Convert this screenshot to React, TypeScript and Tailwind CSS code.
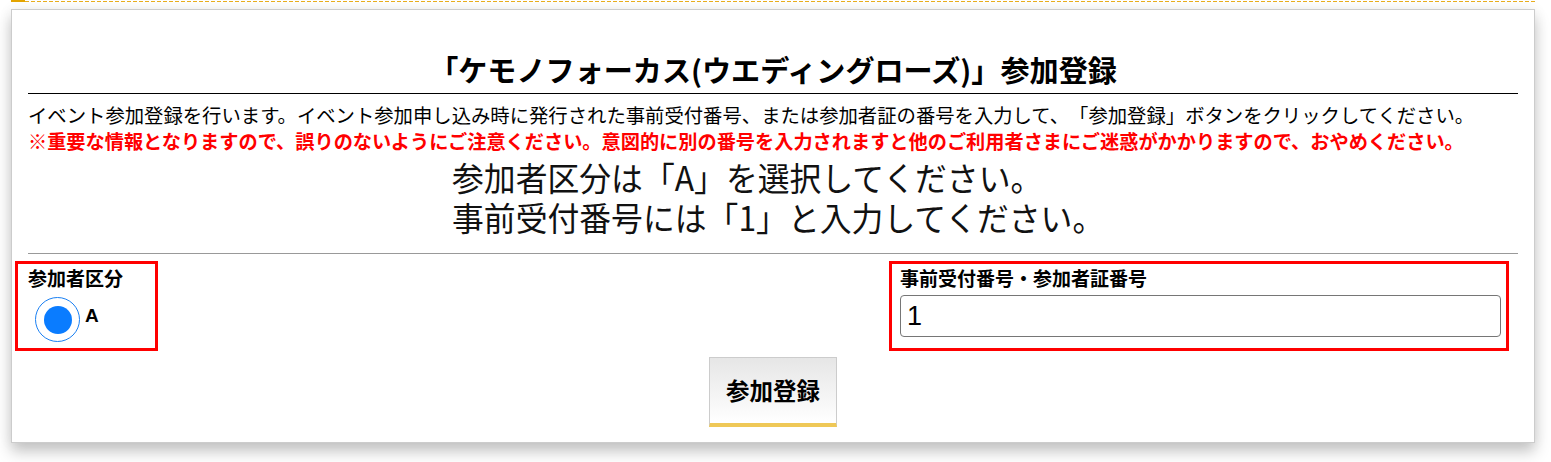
import React from "react";

const jp = "font-['Noto_Sans_CJK_JP','Noto_Sans',sans-serif]";

export default function App() {
  return (
    <div className={`min-h-[462px] w-[1551px] overflow-hidden bg-white text-black [text-spacing-trim:space-all] ${jp}`}>
      {/* top rule */}
      <div className="ml-[11px] flex h-[2px] w-[1524px]">
        <div className="h-[2px] w-[14px] bg-[#e3a400]" />
        <div className="mt-px h-px flex-1 bg-[repeating-linear-gradient(90deg,#e8ac1c_0_4px,transparent_4px_6px)]" />
      </div>

      <div className="ml-[11px] mt-[7px] w-[1524px] border border-[#cccccc] bg-white px-4 pb-[15px] shadow-[0_9px_14px_rgba(0,0,0,0.22),0_0_14px_rgba(0,0,0,0.06)]">
        <h1 className="border-b border-black pb-[5px] pt-[40px] text-center text-[29.1px] font-bold leading-[38px]">
          「ケモノフォーカス(ウエディングローズ)」参加登録
        </h1>

        <p className="mt-2 text-[19.35px] leading-[26px]">
          イベント参加登録を行います。イベント参加申し込み時に発行された事前受付番号、または参加者証の番号を入力して、「参加登録」ボタンをクリックしてください。
        </p>
        <p className="text-[19.2px] font-bold leading-[26px] text-[#ff0000]">
          ※重要な情報となりますので、誤りのないようにご注意ください。意図的に別の番号を入力されますと他のご利用者さまにご迷惑がかかりますので、おやめください。
        </p>

        <div className="mt-[3px] pl-[424px] text-[33.5px] leading-[40px] text-[#111]">
          <div className="origin-left scale-x-[0.95]">参加者区分は「A」を選択してください。</div>
          <div className="origin-left scale-x-[0.95]">事前受付番号には「1」と入力してください。</div>
        </div>

        <div className="mt-[16px] h-px bg-[#999999]" />

        <div className="-ml-[13px] mr-[9px] mt-[7px] flex justify-between">
          <div className="h-[90px] w-[143px] border-[3px] border-[#ff0000] pl-[10px] pt-[2px]">
            <div className="text-[19px] font-bold leading-[24px]">参加者区分</div>
            <label className="ml-[7px] mt-[7px] flex items-center gap-[5px]">
              <span className="flex h-[45px] w-[45px] items-center justify-center rounded-full border border-[#1a7ff2] bg-white">
                <span className="h-[28px] w-[28px] rounded-full bg-[#0a7cff]" />
              </span>
              <span className="-mt-[6px] font-['Liberation_Sans',sans-serif] text-[19px] font-bold">A</span>
            </label>
          </div>

          <div className="h-[90px] w-[620px] border-[3px] border-[#ff0000] pl-[8px] pr-[5px] pt-[2px]">
            <div className="text-[19px] font-bold leading-[24px]">事前受付番号・参加者証番号</div>
            <input
              type="text"
              defaultValue="1"
              className="mt-[5px] h-[42px] w-full rounded-[4px] border border-[#767676] bg-white px-[6px] font-['Liberation_Sans',sans-serif] text-[27px] outline-none"
            />
          </div>
        </div>

        <div className="mt-[6px] flex justify-center">
          <button
            type="button"
            className="h-[70px] w-[128px] border border-b-4 border-[#cccccc] border-b-[#efc857] bg-[linear-gradient(#e6e6e6,#ffffff)] text-[23.5px] font-bold"
          >
            参加登録
          </button>
        </div>
      </div>
    </div>
  );
}
